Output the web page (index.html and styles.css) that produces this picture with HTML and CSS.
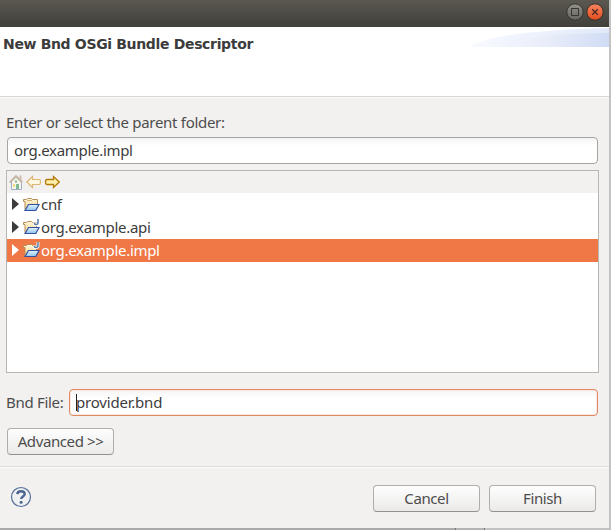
FILE: index.html
```
<!DOCTYPE html>
<html lang="en">
<head>
<meta charset="utf-8">
<title>New Bnd OSGi Bundle Descriptor</title>
<link rel="stylesheet" href="styles.css">
</head>
<body>
<svg class="defs" width="0" height="0" aria-hidden="true">
  <defs>
    <linearGradient id="cream" x2="0" y2="1"><stop stop-color="#fff9df"/><stop offset="1" stop-color="#f4cf83"/></linearGradient>
    <linearGradient id="blue" x2="0" y2="1"><stop stop-color="#e1f3fd"/><stop offset="1" stop-color="#8fc3ef"/></linearGradient>
    <symbol id="folder" viewBox="0 0 17 16">
      <path d="M2 13.5V5.500H.5V3.500H3.500L4.500 2.500H8.500L9.500 3.500H14.500V9" fill="url(#cream)" stroke="#b98b55"/>
      <path d="M4 4.500h5" stroke="#d5b176"/>
      <path d="M2 14.500L5.500 8.500H16L12.800 14.500Z" fill="url(#blue)" stroke="#3451a0" stroke-width="1.200"/>
    </symbol>
    <symbol id="jfolder" viewBox="0 0 17 16">
      <path d="M2 13.500V5.500H.5V3.500H3.500L4.500 2.500H8.500L9.500 3.500H13.500V9" fill="url(#cream)" stroke="#b98b55"/>
      <path d="M2 14.500L5.500 8.500H16L12.800 14.500Z" fill="url(#blue)" stroke="#3451a0" stroke-width="1.200"/>
      <path d="M11 3.500Q11.300 5.500 13 5.500 15 5.500 15 3.500V0" fill="none" stroke="#fff" stroke-width="3"/>
      <path d="M11.300 4Q11.300 5.500 13 5.500 15 5.500 15 3.500V0" fill="none" stroke="#557fa8" stroke-width="1.500"/>
    </symbol>
  </defs>
</svg>
<div class="window">
  <div class="titlebar">
    <svg class="control" viewBox="0 0 18 18"><defs><linearGradient id="gr" x2="0" y2="1"><stop stop-color="#92918b"/><stop offset="1" stop-color="#65645e"/></linearGradient></defs><circle cx="9" cy="9" r="8.2" fill="url(#gr)" stroke="#363530"/><path d="M5.500 5.500h7v7h-7z" fill="none" stroke="#363530"/></svg>
    <svg class="control" viewBox="0 0 18 18"><defs><linearGradient id="rd" x2="0" y2="1"><stop stop-color="#f58563"/><stop offset="1" stop-color="#e34d1d"/></linearGradient></defs><circle cx="9" cy="9" r="8.2" fill="url(#rd)" stroke="#3c3029"/><path d="M6.200 6.200l5.600 5.600M11.800 6.200l-5.600 5.600" stroke="#4b2a1d" stroke-width="1.300"/></svg>
  </div>
  <header class="header">
    <h1>New Bnd OSGi Bundle Descriptor</h1>
    <svg class="swoosh" viewBox="0 0 140 20" preserveAspectRatio="none">
      <defs>
        <linearGradient id="s1"><stop stop-color="#f8faff"/><stop offset="1" stop-color="#e1e9f9"/></linearGradient>
        <linearGradient id="s2"><stop stop-color="#f8faff"/><stop offset=".55" stop-color="#e9edf9"/><stop offset="1" stop-color="#d0dcf5"/></linearGradient>
      </defs>
      <path d="M0 20C18 9 62 3 140 1V20Z" fill="url(#s1)"/>
      <path d="M4 20C35 12 80 7 140 6V20Z" fill="url(#s2)"/>
    </svg>
  </header>
  <main class="content">
    <div class="label">Enter or select the parent folder:</div>
    <div class="input parent"><span>org.example.impl</span></div>
    <div class="tree">
      <div class="toolbar">
        <svg width="16" height="16" viewBox="0 0 16 16" opacity=".8">
          <path d="M11.500 1.500h2v5h-2z" fill="#c9b79c"/>
          <path d="M3.500 7.500L8 3l5.500 4.500V15.500h-10z" fill="#f7f8ef" stroke="#8e9cbb"/>
          <path d="M1.800 8.500L8 2.200l6.200 6.300" fill="none" stroke="#b9ab92" stroke-width="2"/>
          <path d="M7 6.500h2v2h-2z" fill="#6ba77a"/><path d="M5 10h2v3H5z" fill="#f5d66d"/><path d="M8 10h3v5H8z" fill="#62ad7e"/>
        </svg>
        <svg width="16" height="16" viewBox="0 0 16 16"><path d="M.8 8L6.500 2.500V5.500H13Q14.500 5.500 14.500 8T13 10.500H6.500V13.500Z" fill="#fff8e3" stroke="#ddb574" stroke-width="1.200"/></svg>
        <svg width="16" height="16" viewBox="0 0 16 16"><path d="M15.200 8L9.500 2.500V5.500H3Q1.500 5.500 1.500 8T3 10.500H9.500V13.500Z" fill="#fff0ac" stroke="#b57908" stroke-width="1.300"/></svg>
      </div>
      <div class="row"><i class="arrow"></i><svg class="folder"><use href="#folder"/></svg><span>cnf</span></div>
      <div class="row"><i class="arrow"></i><svg class="folder"><use href="#jfolder"/></svg><span>org.example.api</span></div>
      <div class="row selected"><i class="arrow"></i><svg class="folder"><use href="#jfolder"/></svg><span>org.example.impl</span></div>
    </div>
    <div class="file-row">
      <div class="file-label">Bnd File:</div>
      <div class="input focused"><i class="caret"></i><span>provider.bnd</span></div>
    </div>
    <button class="advanced"><span>Advanced &gt;&gt;</span></button>
  </main>
  <footer class="footer">
    <svg class="help" viewBox="0 0 22 22"><circle cx="11" cy="11" r="9.500" fill="#eef0f2" stroke="#566f99" stroke-width="1.200"/><path d="M7.300 8.200C7.500 6 9 5.200 11 5.200c2.200 0 3.700 1 3.700 2.700 0 2.500-3.500 2.500-3.500 5" fill="none" stroke="#4c6590" stroke-width="2.400"/><circle cx="11.100" cy="16.200" r="1.500" fill="#4c6590"/></svg>
    <div class="actions"><button class="cancel"><span>Cancel</span></button><button class="finish"><span>Finish</span></button></div>
  </footer>
</div>
</body>
</html>
```
FILE: styles.css
```
* { box-sizing: border-box; }
body {
  margin: 0;
  height: 530px;
  overflow: hidden;
  background: linear-gradient(90deg, #a9a9a9 455px, #777 455px, #777 456px, #b4b4b4 456px, #b4b4b4 484px, #777 484px, #777 485px, #c3c3c3 485px);
  font: 15px/20px "Noto Sans", sans-serif;
  letter-spacing: -0.3px;
  color: #4c4c4c;
}
.defs { position: absolute; }
.window {
  width: 609px;
  height: 528px;
  display: flex;
  flex-direction: column;
  background: #f2f1f0;
}
.titlebar {
  height: 27px;
  padding: 3px 5px 0 0;
  display: flex;
  justify-content: flex-end;
  gap: 2px;
  background: linear-gradient(#5b5851, #403f3a);
}
.control { width: 18px; height: 18px; }
.header {
  height: 70px;
  display: flex;
  justify-content: space-between;
  background: #fff;
  border-bottom: 1px solid #d9d8d6;
}
h1 {
  margin: 7px 0 0 3px;
  font: bold 14px/20px "DejaVu Sans", sans-serif;
  letter-spacing: -0.34px;
  color: #3c3c3c;
  white-space: nowrap;
}
.swoosh { width: 140px; height: 20px; }
.content {
  height: 369px;
  border-top: 1px solid #fafafa;
  padding: 15px 10px 0 6px;
}
.label { height: 24px; line-height: 19px; }
.input {
  height: 27px;
  display: flex;
  align-items: center;
  border: 1px solid #a7a5a2;
  border-radius: 4px;
  background: linear-gradient(#f4f4f4, #fff 8px);
  color: #3c3c3c;
}
.parent { margin: 0 5px 0 1px; padding-left: 6px; width: 591px; }
.tree {
  width: 593px;
  height: 203px;
  margin-top: 6px;
  background: #fff;
  border: 1px solid #b8b6b3;
}
.toolbar {
  height: 22px;
  padding: 3px 0 0 1px;
  display: flex;
  gap: 2px;
  background: #f2f1f0;
}
.row {
  height: 23px;
  display: flex;
  align-items: center;
  color: #3c3c3c;
}
.arrow {
  width: 7px;
  height: 12px;
  margin: 0 4px 1px 5px;
  background: currentColor;
  clip-path: polygon(0 0, 100% 50%, 0 100%);
}
.folder { width: 17px; height: 16px; margin: 0 1px 2px 0; }
.selected { background: #f07746; color: #fff; }
.file-row { display: flex; margin-top: 16px; }
.file-label { width: 63px; line-height: 27px; }
.focused {
  width: 529px;
  padding-left: 6px;
  border-color: #df8964;
  box-shadow: inset 0 0 0 1px #fbe9e1;
  letter-spacing: -0.2px;
}
.caret { width: 1px; height: 17px; margin-right: -1px; background: #222; }
button {
  width: 107px;
  height: 27px;
  padding: 0;
  display: flex;
  align-items: center;
  justify-content: center;
  border: 1px solid #b0aeab;
  border-bottom-color: #949290;
  border-radius: 4px;
  background: linear-gradient(#fefefe, #ebeae9);
  font: inherit;
  letter-spacing: -0.4px;
  color: #4c4c4c;
}
.advanced { margin: 12px 0 0 1px; }
.footer {
  flex: 1;
  display: flex;
  justify-content: space-between;
  border-top: 1px solid #dcdbd9;
  box-shadow: inset 0 1px #fbfbfb;
  padding: 18px 13px 0 10px;
}
.help { width: 22px; height: 22px; margin-top: 1px; }
.actions { display: flex; gap: 9px; }
span { white-space: nowrap; padding-bottom: 2px; }
```
